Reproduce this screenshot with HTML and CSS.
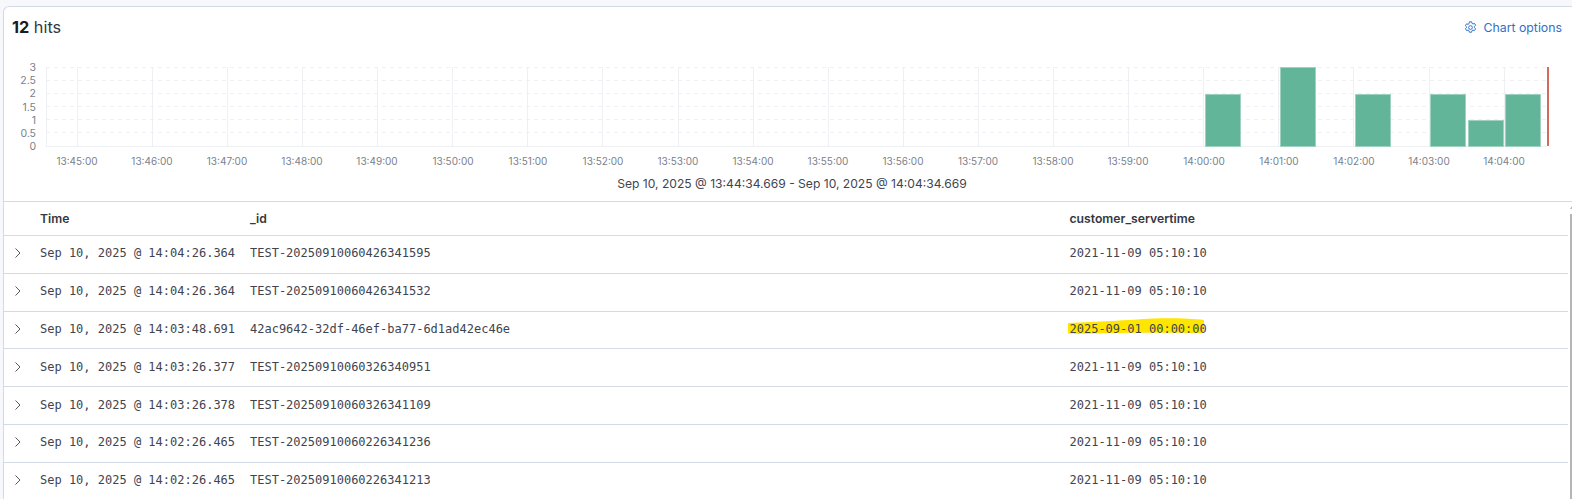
FILE: index.html
```html
<!DOCTYPE html>
<html lang="en">
<head>
<meta charset="utf-8">
<title>Discover</title>
<link rel="stylesheet" href="styles.css">
</head>
<body>
<main class="panel">
  <header class="top">
    <div class="hits"><strong>12</strong> hits</div>
    <a class="options">
      <svg class="gear" viewBox="0 0 16 16" width="13" height="13" fill="none" stroke="currentColor" stroke-width="1.200">
        <path d="M6.6 1h2.8l.4 1.9 1.2.7 1.9-.6 1.4 2.4-1.5 1.3v1.4l1.5 1.3-1.4 2.4-1.9-.6-1.2.7-.4 1.9H6.6l-.4-1.9-1.2-.7-1.9.6-1.4-2.4 1.5-1.3V7.2L1.7 5.9l1.4-2.4 1.9.6 1.2-.7z"/>
        <circle cx="8" cy="8" r="2.3"/>
      </svg>
      Chart options
    </a>
  </header>
  <svg class="chart" viewBox="0 0 1568 162" width="1568" height="162">
    <g class="grid-h">
      <path d="M42 28.5H1543M42 41.5H1543M42 54.5H1543M42 67.5H1543M42 80.5H1543M42 93.5H1543"/>
    </g>
    <g class="grid-v">
      <path d="M42.500 28V107M73.500 28V107M148.500 28V107M223.500 28V107M298.500 28V107M373.500 28V107M448.500 28V107M523.500 28V107M598.500 28V107M674.500 28V107M749.500 28V107M824.500 28V107M899.500 28V107M974.500 28V107M1049.500 28V107M1124.500 28V107M1199.500 28V107M1274.500 28V107M1349.500 28V107M1425.500 28V107M1500.500 28V107"/>
      <path d="M42 107.500H1543"/>
    </g>
    <g class="y-labels">
      <text x="32" y="32">3</text>
      <text x="32" y="45">2.5</text>
      <text x="32" y="58">2</text>
      <text x="32" y="72">1.5</text>
      <text x="32" y="85">1</text>
      <text x="32" y="98">0.5</text>
      <text x="32" y="111">0</text>
    </g>
    <g class="bars">
      <rect x="1201.500" y="55.500" width="35" height="52"/>
      <rect x="1276.500" y="28.500" width="35" height="79"/>
      <rect x="1351.500" y="55.500" width="35" height="52"/>
      <rect x="1426.500" y="55.500" width="35" height="52"/>
      <rect x="1464.500" y="81.500" width="35" height="26"/>
      <rect x="1501.500" y="55.500" width="35" height="52"/>
    </g>
    <rect class="now" x="1543" y="28" width="2" height="79"/>
    <g class="x-labels">
      <text x="73" y="126">13:45:00</text>
      <text x="148" y="126">13:46:00</text>
      <text x="223" y="126">13:47:00</text>
      <text x="298" y="126">13:48:00</text>
      <text x="373" y="126">13:49:00</text>
      <text x="449" y="126">13:50:00</text>
      <text x="524" y="126">13:51:00</text>
      <text x="599" y="126">13:52:00</text>
      <text x="674" y="126">13:53:00</text>
      <text x="749" y="126">13:54:00</text>
      <text x="824" y="126">13:55:00</text>
      <text x="899" y="126">13:56:00</text>
      <text x="974" y="126">13:57:00</text>
      <text x="1049" y="126">13:58:00</text>
      <text x="1124" y="126">13:59:00</text>
      <text x="1200" y="126">14:00:00</text>
      <text x="1275" y="126">14:01:00</text>
      <text x="1350" y="126">14:02:00</text>
      <text x="1425" y="126">14:03:00</text>
      <text x="1500" y="126">14:04:00</text>
    </g>
    <text class="range" x="788" y="149">Sep 10, 2025 @ 13:44:34.669 - Sep 10, 2025 @ 14:04:34.669</text>
  </svg>
  <section class="table">
    <div class="row head">
      <span></span><span>Time</span><span>_id</span><span>customer_servertime</span>
    </div>
    <div class="row">
      <svg class="chev" viewBox="0 0 8 12" width="8" height="12"><path d="M1.500 1.500 6 6l-4.500 4.500"/></svg>
      <span>Sep 10, 2025 @ 14:04:26.364</span><span>TEST-20250910060426341595</span><span>2021-11-09 05:10:10</span>
    </div>
    <div class="row">
      <svg class="chev" viewBox="0 0 8 12" width="8" height="12"><path d="M1.500 1.500 6 6l-4.500 4.500"/></svg>
      <span>Sep 10, 2025 @ 14:04:26.364</span><span>TEST-20250910060426341532</span><span>2021-11-09 05:10:10</span>
    </div>
    <div class="row">
      <svg class="chev" viewBox="0 0 8 12" width="8" height="12"><path d="M1.500 1.500 6 6l-4.500 4.500"/></svg>
      <span>Sep 10, 2025 @ 14:03:48.691</span><span>42ac9642-32df-46ef-ba77-6d1ad42ec46e</span>
      <span class="marked"><svg class="stroke" viewBox="0 0 136 16" width="136" height="16"><path d="M0 5C30 4 60 2 85 .5C105 0 125 .5 136 2L136 15C100 14.500 50 14.500 25 15.500C15 16 5 16 0 15.500Z"/></svg><span class="over">2025-09-01 00:00:00</span></span>
    </div>
    <div class="row">
      <svg class="chev" viewBox="0 0 8 12" width="8" height="12"><path d="M1.500 1.500 6 6l-4.500 4.500"/></svg>
      <span>Sep 10, 2025 @ 14:03:26.377</span><span>TEST-20250910060326340951</span><span>2021-11-09 05:10:10</span>
    </div>
    <div class="row">
      <svg class="chev" viewBox="0 0 8 12" width="8" height="12"><path d="M1.500 1.500 6 6l-4.500 4.500"/></svg>
      <span>Sep 10, 2025 @ 14:03:26.378</span><span>TEST-20250910060326341109</span><span>2021-11-09 05:10:10</span>
    </div>
    <div class="row">
      <svg class="chev" viewBox="0 0 8 12" width="8" height="12"><path d="M1.500 1.500 6 6l-4.500 4.500"/></svg>
      <span>Sep 10, 2025 @ 14:02:26.465</span><span>TEST-20250910060226341236</span><span>2021-11-09 05:10:10</span>
    </div>
    <div class="row">
      <svg class="chev" viewBox="0 0 8 12" width="8" height="12"><path d="M1.500 1.500 6 6l-4.500 4.500"/></svg>
      <span>Sep 10, 2025 @ 14:02:26.465</span><span>TEST-20250910060226341213</span><span>2021-11-09 05:10:10</span>
    </div>
  </section>
  <div class="scroll-arrow"></div>
  <div class="scrollbar"></div>
</main>
</body>
</html>
```
FILE: styles.css
```css
* { box-sizing: border-box; }
html, body { height: 100%; overflow: hidden; }
body {
  margin: 0;
  padding: 6px 0 0 3px;
  background: #f7f8fc;
  font-family: Inter, "Liberation Sans", sans-serif;
  color: #343741;
}
.panel {
  position: relative;
  background: #fff;
  border: 1px solid #d3dae6;
  border-right: 0;
  border-bottom: 0;
  border-top-left-radius: 6px;
  height: 493px;
  overflow: hidden;
}
.top {
  display: flex;
  justify-content: space-between;
  align-items: center;
  height: 32px;
  padding: 8px 10px 0 8px;
}
.hits { font-size: 16.300px; color: #343741; }
.hits strong { font-weight: 700; color: #1a1c21; }
.options {
  display: flex;
  align-items: center;
  gap: 7px;
  font-size: 12.300px;
  color: #2f71c9;
}
.gear { display: block; }
.chart { display: block; }
.grid-h path { stroke: #eef0f4; stroke-width: 1; stroke-dasharray: 4 4; fill: none; }
.grid-v path { stroke: #eef0f4; stroke-width: 1; fill: none; }
.y-labels text { font-size: 10.500px; fill: #7b7f8b; text-anchor: end; }
.x-labels text { font-size: 10px; fill: #7b7f8b; text-anchor: middle; }
.range { font-size: 12.100px; fill: #41444f; text-anchor: middle; }
.bars rect { fill: #63b59a; stroke: #a0d2c1; stroke-width: 1; }
.now { fill: #d36a5e; }
.table { border-top: 1px solid #d3dae6; }
.row {
  display: grid;
  grid-template-columns: 36px 210px 819.500px 1fr;
  align-items: center;
  height: 37.800px;
  padding-bottom: 2px;
  border-bottom: 1px solid #d3dae6;
  font-family: "DejaVu Sans Mono", "Liberation Mono", monospace;
  font-size: 12px;
  color: #41444f;
  margin-right: 4px;
}
.row.head {
  height: 34px;
  padding-bottom: 0;
  font-family: Inter, "Liberation Sans", sans-serif;
  font-weight: 600;
  font-size: 12.200px;
  color: #343741;
}
.chev {
  justify-self: start;
  margin-left: 10px;
  fill: none;
  stroke: #55585f;
  stroke-width: 1;
}
.marked { position: relative; }
.stroke { position: absolute; left: -2px; top: -4px; }
.stroke path { fill: #ffe600; }
.over { position: relative; }
.scroll-arrow {
  position: absolute;
  right: 0;
  top: 199px;
  width: 0;
  height: 0;
  border-left: 2px solid transparent;
  border-bottom: 3px solid #b5b5b8;
}
.scrollbar {
  position: absolute;
  right: 0;
  top: 207px;
  bottom: 0;
  width: 2px;
  background: #b5b5b8;
}
```
